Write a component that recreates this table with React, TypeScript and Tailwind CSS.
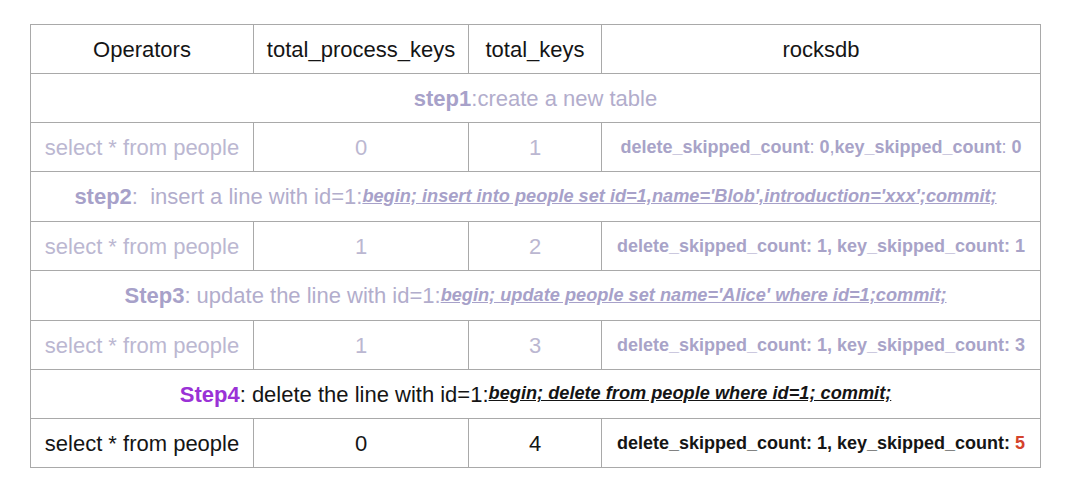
import React from "react";

const cols = "grid grid-cols-[223px_215px_133px_438px]";
const cell = "flex items-center justify-center border-r border-[#a9a9a9] last:border-r-0";

function DataRow({
  op,
  a,
  b,
  rocks,
  tone,
  h,
  last,
}: {
  op: string;
  a: string;
  b: string;
  rocks: React.ReactNode;
  tone: "grey" | "black";
  h: string;
  last?: boolean;
}) {
  const txt = tone === "grey" ? "text-[#bbb7d1]" : "text-[#151515]";
  return (
    <div className={`${cols} ${h} ${last ? "" : "border-b border-[#a9a9a9]"}`}>
      <div className={`${cell} ${txt} text-[22px]`}>{op}</div>
      <div className={`${cell} ${txt} text-[22px]`}>{a}</div>
      <div className={`${cell} ${txt} text-[22px]`}>{b}</div>
      <div className={`${cell} text-[18px] font-bold ${tone === "grey" ? "text-[#a8a3c8]" : "text-[#151515]"}`}>
        {rocks}
      </div>
    </div>
  );
}

function StepRow({ children, h }: { children: React.ReactNode; h: string }) {
  return (
    <div className={`flex items-center justify-center ${h} border-b border-[#a9a9a9] whitespace-pre`}>
      {children}
    </div>
  );
}

export default function App() {
  return (
    <div
      className="w-[1080px] h-[480px] bg-white pt-[24px] pl-[30px]"
      style={{ fontFamily: '"Liberation Sans", Arial, sans-serif' }}
    >
      <div className="w-[1011px] border border-[#a9a9a9]">
        <div className={`${cols} h-[49px] border-b border-[#a9a9a9]`}>
          <div className={`${cell} text-[22px] text-[#151515]`}>Operators</div>
          <div className={`${cell} text-[22px] text-[#151515]`}>total_process_keys</div>
          <div className={`${cell} text-[22px] text-[#151515]`}>total_keys</div>
          <div className={`${cell} text-[22px] text-[#151515]`}>rocksdb</div>
        </div>

        <StepRow h="h-[49px]">
          <span className="text-[22px] font-bold text-[#a7a1c9]">step1</span>
          <span className="text-[22px] text-[#b2adcc]">:create a new table</span>
        </StepRow>

        <DataRow
          op="select * from people"
          a="0"
          b="1"
          tone="grey"
          h="h-[49px]"
          rocks={
            <span>
              delete_skipped_count<span className="font-normal">:</span> 0<span className="font-normal">,</span>key_skipped_count<span className="font-normal">:</span> 0
            </span>
          }
        />

        <StepRow h="h-[50px]">
          <span className="text-[22px] font-bold text-[#a7a1c9]">step2</span>
          <span className="text-[22px] text-[#b2adcc]">:  insert a line with id=1:</span>
          <span className="text-[18.2px] font-bold italic underline text-[#a7a1c9]">
            begin; insert into people set id=1,name='Blob',introduction='xxx';commit;
          </span>
        </StepRow>

        <DataRow
          op="select * from people"
          a="1"
          b="2"
          tone="grey"
          h="h-[49px]"
          rocks={<span>delete_skipped_count: 1, key_skipped_count: 1</span>}
        />

        <StepRow h="h-[50px]">
          <span className="text-[22px] font-bold text-[#a7a1c9]">Step3</span>
          <span className="text-[22px] text-[#b2adcc]">: update the line with id=1:</span>
          <span className="text-[18.2px] font-bold italic underline text-[#a7a1c9]">
            begin; update people set name='Alice' where id=1;commit;
          </span>
        </StepRow>

        <DataRow
          op="select * from people"
          a="1"
          b="3"
          tone="grey"
          h="h-[49px]"
          rocks={<span>delete_skipped_count: 1, key_skipped_count: 3</span>}
        />

        <StepRow h="h-[49px]">
          <span className="text-[22px] font-bold text-[#9a32d6]">Step4</span>
          <span className="text-[22px] text-[#151515]">: delete the line with id=1:</span>
          <span className="text-[18.2px] font-bold italic underline text-[#151515]">
            begin; delete from people where id=1; commit;
          </span>
        </StepRow>

        <DataRow
          op="select * from people"
          a="0"
          b="4"
          tone="black"
          h="h-[48px]"
          last
          rocks={
            <span>
              delete_skipped_count: 1, key_skipped_count: <span className="text-[#d4432c]">5</span>
            </span>
          }
        />
      </div>
    </div>
  );
}
